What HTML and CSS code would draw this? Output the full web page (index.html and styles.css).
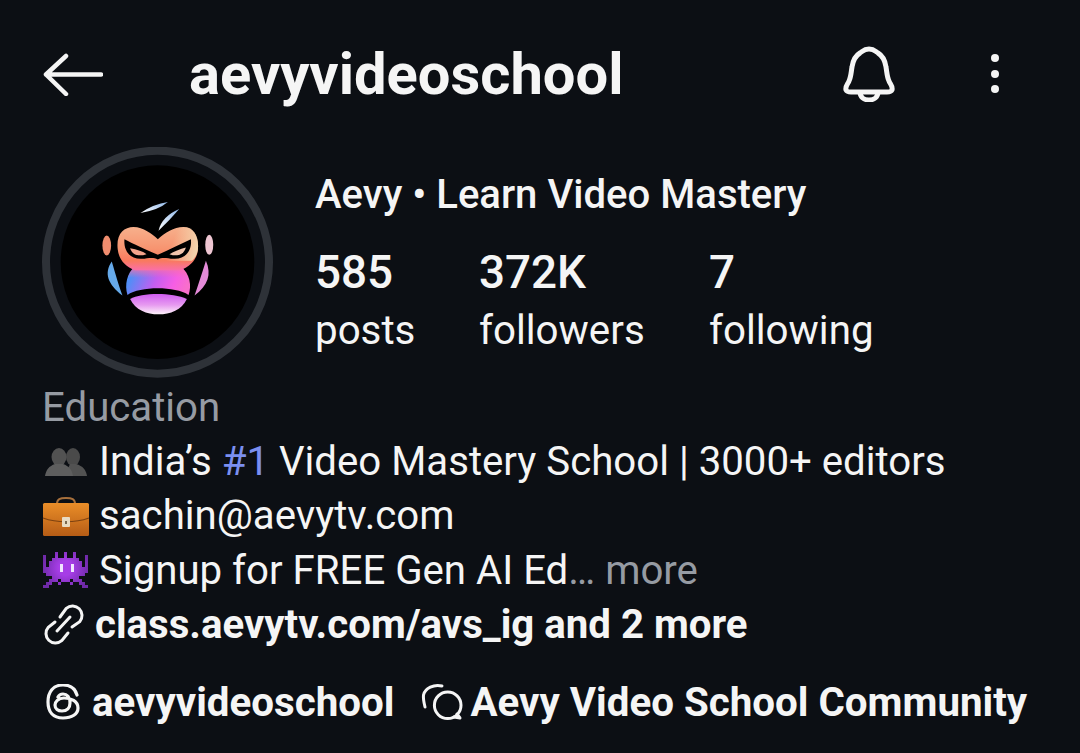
FILE: index.html
```html
<!DOCTYPE html>
<html lang="en">
<head>
    <meta charset="UTF-8">
    <title>aevyvideoschool</title>
    <link rel="stylesheet" href="styles.css">
</head>
<body>
<header class="topbar">
    <svg class="back-icon" viewBox="0 0 60 44" fill="none" stroke="#f5f5f5" stroke-width="4.5" stroke-linecap="round" stroke-linejoin="round">
        <path d="M58 22.500H3M23 4L3 22.500 23 42"/>
    </svg>
    <h1 class="username">aevyvideoschool</h1>
    <svg class="bell-icon" viewBox="0 0 52 56" fill="none" stroke="#f5f5f5" stroke-width="5" stroke-linejoin="round">
        <path d="M26 3c-5 0-6 2-9 4-5 3-7 7-8 14-1 6-1 10-3 14-1 3-4 5-3 9 1 2 3 2 5 2h36c2 0 4 0 5-2 1-4-2-6-3-9-2-4-2-8-3-14-1-7-3-11-8-14-3-2-4-4-9-4z"/>
        <path d="M17 46c0 5 4 8 9 8s9-3 9-8"/>
    </svg>
    <div class="more-icon"><span></span><span></span><span></span></div>
</header>

<section class="profile">
    <svg class="avatar" viewBox="36 22 692 692">
        <defs>
            <linearGradient id="face" x1="0" y1="0" x2="0" y2="1">
                <stop offset="0" stop-color="#f7b08c"/>
                <stop offset="0.5" stop-color="#f79470"/>
                <stop offset="0.78" stop-color="#f97a5e"/>
                <stop offset="1" stop-color="#fa6fa8"/>
            </linearGradient>
            <linearGradient id="faceTint" x1="0" y1="0.2" x2="1" y2="0.5">
                <stop offset="0.4" stop-color="#f2e0b8" stop-opacity="0"/>
                <stop offset="1" stop-color="#f2e0b8" stop-opacity="0.85"/>
            </linearGradient>
            <linearGradient id="muzzle" x1="0" y1="0.2" x2="1" y2="0.4">
                <stop offset="0.1" stop-color="#4f8ef7"/>
                <stop offset="0.5" stop-color="#c45ef0"/>
                <stop offset="0.8" stop-color="#f65ee4"/>
                <stop offset="1" stop-color="#f86ecc"/>
            </linearGradient>
            <linearGradient id="muzzleTop" x1="0" y1="0" x2="0" y2="1">
                <stop offset="0" stop-color="#fa6fa8"/>
                <stop offset="0.4" stop-color="#fa6fa8" stop-opacity="0"/>
            </linearGradient>
            <linearGradient id="chin" x1="0" y1="0" x2="0" y2="1">
                <stop offset="0" stop-color="#cf5cf0"/>
                <stop offset="0.55" stop-color="#e79bf0"/>
                <stop offset="1" stop-color="#fdf2fa"/>
            </linearGradient>
            <linearGradient id="hair" x1="0" y1="1" x2="1" y2="0">
                <stop offset="0" stop-color="#ffffff"/>
                <stop offset="1" stop-color="#8fb8ea"/>
            </linearGradient>
        </defs>
        <circle cx="382" cy="367" r="334" fill="#0c0f14" stroke="#2e3238" stroke-width="24"/>
        <circle cx="382" cy="367" r="290" fill="#000"/>
        <g transform="translate(195 165)">
            <path d="M136 55Q175 28 218 22Q190 46 136 55z" fill="url(#hair)"/>
            <path d="M190 108Q200 65 252 43Q225 75 190 108z" fill="url(#hair)"/>
            <ellipse cx="35" cy="152" rx="13" ry="30" fill="#f08d6e"/>
            <ellipse cx="342" cy="150" rx="12" ry="30" fill="#eec6d2"/>
            <path d="M50 200C26 235 38 268 82 302C70 270 62 240 50 200z" fill="#66aaea"/>
            <path d="M332 198C350 240 338 272 298 302C310 268 320 236 332 198z" fill="#e48ad8"/>
            <path d="M120 215H255C285 235 290 275 280 300C240 274 135 274 97 300C88 270 95 235 120 215z" fill="url(#muzzle)"/>
            <path d="M120 215H255C285 235 290 275 280 300C240 274 135 274 97 300C88 270 95 235 120 215z" fill="url(#muzzleTop)"/>
            <path d="M105 312C140 292 232 292 275 312C260 345 225 358 190 358C155 358 120 345 105 312z" fill="url(#chin)"/>
            <path d="M68 165C62 120 85 97 115 97C145 97 170 118 188 133C210 115 235 97 265 97C295 97 312 125 308 165C305 195 285 215 255 226H120C90 215 72 195 68 165z" fill="url(#face)"/>
            <path d="M188 133C210 115 235 97 265 97C295 97 312 125 308 165C306 180 298 190 290 198H188z" fill="url(#faceTint)"/>
            <path d="M88 133C115 148 150 162 188 180C225 162 255 148 287 133C291 166 272 194 235 192C215 190 200 186 188 194C175 186 160 190 140 192C103 194 85 166 88 133z" fill="#000"/>
            <path d="M105 160C125 163 145 170 154 178C130 186 112 181 105 160z" fill="#f4a48c"/>
            <path d="M272 158C255 163 235 170 223 178C245 186 265 181 272 158z" fill="#f2c4ac"/>
        </g>
    </svg>
    <div class="profile-info">
        <div class="display-name">Aevy • Learn Video Mastery</div>
        <div class="stats">
            <div class="stat stat-posts"><strong>585</strong><span>posts</span></div>
            <div class="stat stat-followers"><strong>372K</strong><span>followers</span></div>
            <div class="stat"><strong>7</strong><span>following</span></div>
        </div>
    </div>
</section>

<section class="bio">
    <div class="bio-line category">Education</div>
    <div class="bio-line">
        <svg class="emoji" viewBox="0 0 48 40">
            <ellipse cx="31" cy="15" rx="7" ry="9" fill="#4a4a4a"/>
            <path d="M26 34c0-5 0-9 2-12h6c7 2 10 6 11 12z" fill="#525252"/>
            <ellipse cx="17" cy="15" rx="7.500" ry="9" fill="#525252"/>
            <path d="M3 34c1-6 4-10 10-12h8c6 2 9 6 10 12z" fill="#5e5e5e"/>
        </svg>
        <span>India’s <span class="tag">#1</span> Video Mastery School | 3000+ editors</span>
    </div>
    <div class="bio-line">
        <svg class="emoji" viewBox="0 0 48 40">
            <defs>
                <linearGradient id="caseBody" x1="0" y1="0" x2="0" y2="1">
                    <stop offset="0" stop-color="#ea8e28"/>
                    <stop offset="1" stop-color="#b65c16"/>
                </linearGradient>
            </defs>
            <path d="M15 8c0-5 3-6 9-6s9 1 9 6" fill="none" stroke="#a8703c" stroke-width="2"/>
            <rect x="1" y="7" width="46" height="33" rx="1.500" fill="url(#caseBody)"/>
            <path d="M1 22c14 5 32 5 46 0" fill="none" stroke="#7e4210" stroke-width="1.200"/>
            <rect x="20" y="21" width="8" height="10" rx="1" fill="#e8dcc4"/>
            <rect x="23" y="25" width="2" height="3" fill="#7a6a50"/>
        </svg>
        <span>sachin@aevytv.com</span>
    </div>
    <div class="bio-line">
        <svg class="emoji" viewBox="-1 -2 48 40">
            <defs>
                <radialGradient id="alienBody" gradientUnits="userSpaceOnUse" cx="22.500" cy="16" r="24">
                    <stop offset="0.3" stop-color="#a63de6"/>
                    <stop offset="1" stop-color="#6f2aa8"/>
                </radialGradient>
            </defs>
            <path d="M12 0h3v3h-3zM21 0h3v3h-3zM30 0h3v3h-3zM0 3h3v3h-3zM12 3h3v3h-3zM21 3h3v3h-3zM30 3h3v3h-3zM42 3h3v3h-3zM0 6h3v3h-3zM9 6h27v3h-27zM42 6h3v3h-3zM0 9h3v6h-3zM6 9h33v6h-33zM42 9h3v6h-3zM0 15h45v6h-45zM3 21h39v3h-39zM9 24h27v3h-27zM6 27h9v3h-9zM18 27h9v3h-9zM30 27h9v3h-9zM3 30h6v3h-6zM15 30h3v3h-3zM27 30h3v3h-3zM36 30h6v3h-6zM0 33h6v3h-6zM39 33h6v3h-6z" fill="url(#alienBody)"/>
            <rect x="17" y="12" width="3" height="8" fill="#f0e4ff"/>
            <rect x="28" y="12" width="3" height="8" fill="#f0e4ff"/>
        </svg>
        <span>Signup for FREE Gen AI Ed<span class="muted">… more</span></span>
    </div>
    <div class="bio-line link-line">
        <svg class="link-icon" viewBox="0 0 40 40" fill="none" stroke="#f5f5f5" stroke-width="3" stroke-linecap="round">
            <path d="M13 26L26 12"/>
            <path d="M16 12L22.300 3.300A9.500 9.500 0 0 1 35.700 16.700L28 22"/>
            <path d="M11 17L4.300 22.300A9.500 9.500 0 0 0 17.700 35.700L24 28"/>
        </svg>
        <strong>class.aevytv.com/avs_ig and 2 more</strong>
    </div>
</section>

<section class="socials">
    <svg class="threads-icon" viewBox="0 0 34 36" fill="none" stroke="#f5f5f5" stroke-width="3.200" stroke-linecap="round">
        <path d="M31 11C29 4 24 1 17 1C7 1 2 8 2 18C2 28 7 34 17 34C26 34 32 30 32 24C32 17 25 14 18 14C12 14 9 18 9 21C9 25 12 27 16 27C21 27 24 24 24 19C24 13 21 10 17 10C15 10 13 11 12 13"/>
    </svg>
    <strong class="threads-name">aevyvideoschool</strong>
    <svg class="community-icon" viewBox="0 0 40 36" fill="none" stroke="#f5f5f5" stroke-width="3" stroke-linecap="round" stroke-linejoin="round">
        <path d="M20 2C12 0 3 4 1.500 11C1 15 2 19 3 23"/>
        <circle cx="25.700" cy="21.300" r="13.300"/>
        <path d="M35 30L38 34 32 33"/>
    </svg>
    <strong>Aevy Video School Community</strong>
</section>
</body>
</html>
```
FILE: styles.css
```css
body {
    font-family: Roboto, "Liberation Sans", sans-serif;
    margin: 0;
    padding: 0 0 0 42px;
    background-color: #0c0f14;
    color: #f5f5f5;
    height: 753px;
    overflow: hidden;
    box-sizing: border-box;
}

.topbar {
    display: flex;
    align-items: center;
    height: 147px;
}

.back-icon {
    width: 60px;
    height: 44px;
    margin-left: 1px;
    margin-right: 86px;
}

.username {
    margin: 0;
    font-size: 57.9px;
    font-weight: 700;
    width: 654px;
}

.bell-icon {
    width: 52px;
    height: 56px;
    margin-right: 96px;
}

.more-icon {
    display: flex;
    flex-direction: column;
    gap: 7.7px;
}

.more-icon span {
    width: 8px;
    height: 8px;
    border-radius: 50%;
    background-color: #f5f5f5;
}

.profile {
    display: flex;
    height: 231px;
}

.avatar {
    width: 231px;
    height: 231px;
    margin-right: 42px;
    flex-shrink: 0;
}

.display-name {
    font-size: 40.1px;
    font-weight: 500;
    line-height: 46px;
    margin-top: 25px;
}

.stats {
    display: flex;
    margin-top: 28px;
}

.stat {
    display: flex;
    flex-direction: column;
    font-size: 40.3px;
}

.stat strong {
    font-size: 45.8px;
    font-weight: 500;
    line-height: 54px;
}

.stat span {
    line-height: 62px;
}

.stat-posts {
    width: 164px;
}

.stat-followers {
    width: 230px;
}

.bio {
    margin-top: 2px;
}

.bio-line {
    display: flex;
    align-items: center;
    font-size: 40.2px;
    height: 54.4px;
    white-space: nowrap;
}

.category,
.muted {
    color: #969ba3;
}

.tag {
    color: #7b8ff0;
}

.emoji {
    width: 48px;
    height: 40px;
    margin-right: 9px;
    flex-shrink: 0;
}

.link-line strong {
    font-weight: 700;
}

.link-icon {
    width: 40px;
    height: 40px;
    margin-left: 2px;
    margin-right: 11px;
    overflow: visible;
}

.socials {
    display: flex;
    align-items: center;
    margin-top: 27px;
    font-size: 40.3px;
    white-space: nowrap;
}

.threads-icon {
    width: 34px;
    height: 36px;
    margin-left: 4px;
    margin-right: 12px;
}

.threads-name {
    margin-right: 28px;
}

.community-icon {
    width: 40px;
    height: 36px;
    margin-right: 8px;
    overflow: visible;
}
```
